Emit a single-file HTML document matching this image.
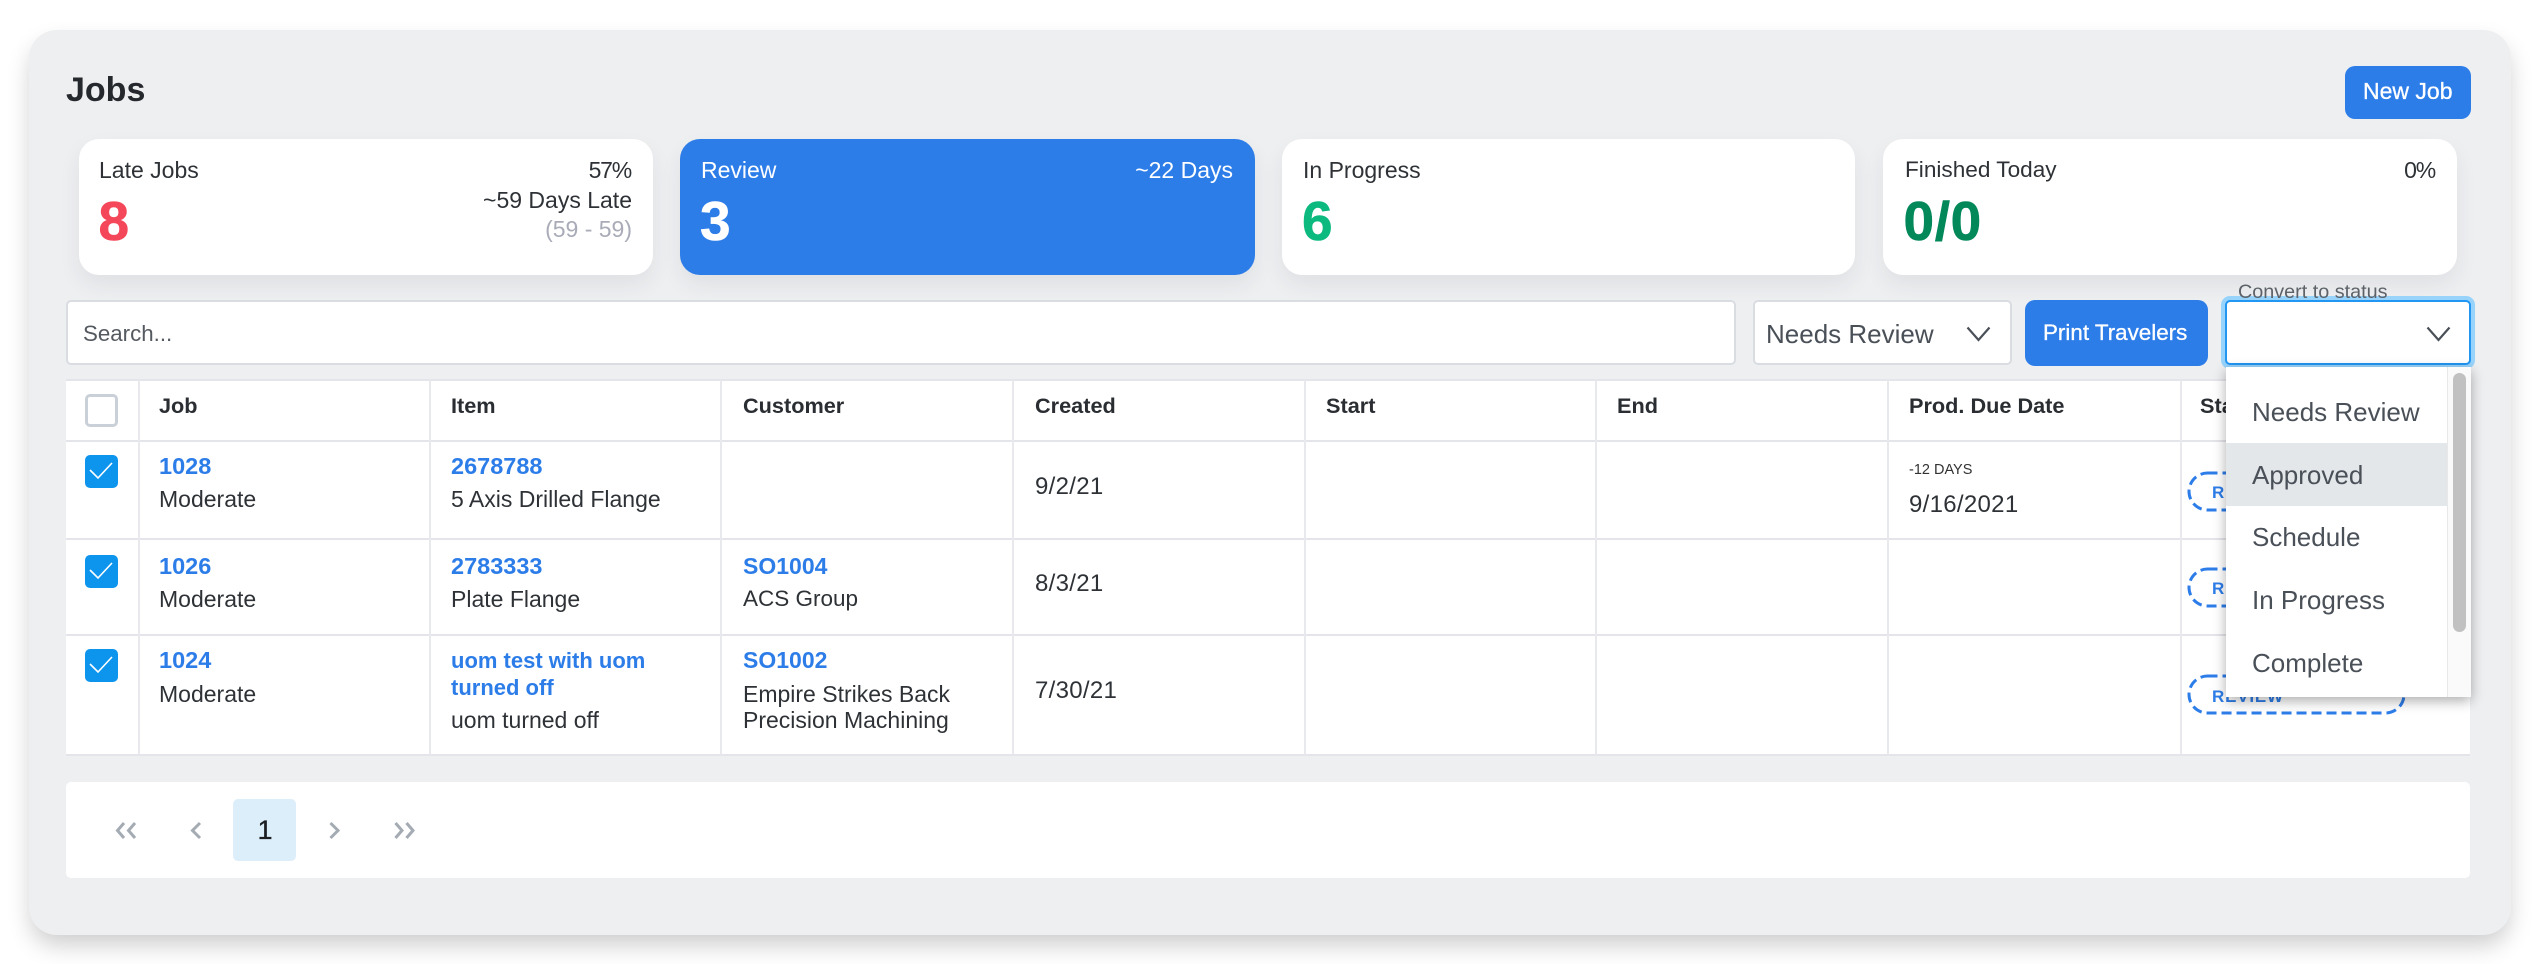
<!DOCTYPE html>
<html lang="en">
<head>
<meta charset="utf-8">
<title>Jobs</title>
<style>
html,body{margin:0;padding:0;background:#fff;width:2539px;height:964px;overflow:hidden}
body{position:relative;font-family:"Liberation Sans",Arial,sans-serif;color:#2e3236}
.a,.t{position:absolute}
.t{line-height:1;white-space:nowrap}
.panel{left:29px;top:30px;width:2482px;height:905px;background:#eeeff1;border-radius:28px;box-shadow:0 12px 24px -2px rgba(0,0,0,.2)}
.card{top:139px;height:136px;background:#fff;border-radius:20px;box-shadow:0 10px 22px rgba(30,40,60,.07)}
.s23{font-size:23px}
.b{font-weight:700}
.l{color:#2d7de9;font-weight:700;font-size:23.5px}
.w{color:#2d7de9;font-weight:700;font-size:22px}
.h{font-weight:700;font-size:21.7px;color:#2a2d31}
.r{text-align:right}
.num{font-size:55px;font-weight:700;-webkit-text-stroke:.6px currentColor}
.d{font-size:24px;letter-spacing:.3px}
.pc{letter-spacing:-1.2px}
.btn{background:#2d7de9;border-radius:10px}
.field{background:#fff;border:2px solid #d9dce1;border-radius:5px;box-sizing:border-box}
.vl{top:380px;width:2px;height:375px;background:#e8e9ed}
.hl{left:66px;width:2404px;height:2px;background:#e4e5ea}
.cb{left:85px;width:33px;height:33px;border-radius:5px;background:#0d95ee}
.cb svg{display:block}
.item{left:2252px;font-size:26px;color:#4a5058}
</style>
</head>
<body>
<div class="a panel"></div>

<div class="t b" style="left:66px;top:73px;font-size:34px;color:#25282c">Jobs</div>
<div class="a btn" style="left:2345px;top:66px;width:126px;height:53px"></div>
<div class="t s23" style="left:2363px;top:80px;color:#fff;-webkit-text-stroke:.3px #fff">New Job</div>

<!-- cards -->
<div class="a card" style="left:79px;width:574px"></div>
<div class="a card" style="left:680px;width:575px;background:#2d7de9"></div>
<div class="a card" style="left:1282px;width:573px"></div>
<div class="a card" style="left:1883px;width:574px"></div>

<div class="t s23" style="left:99px;top:158.5px">Late Jobs</div>
<div class="t s23 r pc" style="right:1908px;top:158.5px">57%</div>
<div class="t s23 r" style="right:1907px;top:188.5px">~59 Days Late</div>
<div class="t s23 r" style="right:1907px;top:218px;color:#a9acb8">(59 - 59)</div>
<div class="t num" style="left:98.5px;top:193.5px;color:#f4485a">8</div>

<div class="t s23" style="left:701px;top:158.5px;color:#fff">Review</div>
<div class="t s23 r" style="right:1306px;top:158.5px;color:#fff">~22 Days</div>
<div class="t num" style="left:700px;top:193.5px;color:#fff">3</div>

<div class="t s23" style="left:1303px;top:158.5px">In Progress</div>
<div class="t num" style="left:1302px;top:193.5px;color:#0cb97f">6</div>

<div class="t" style="left:1905px;top:159px;font-size:22.6px">Finished Today</div>
<div class="t s23 r pc" style="right:104px;top:158.5px">0%</div>
<div class="t num" style="left:1903.5px;top:193.5px;color:#03885a;letter-spacing:.6px">0/0</div>

<!-- toolbar -->
<div class="a field" style="left:66px;top:300px;width:1670px;height:65px"></div>
<div class="t" style="left:83px;top:323px;font-size:22.3px;color:#555a60">Search...</div>

<div class="a field" style="left:1753px;top:300px;width:259px;height:65px"></div>
<div class="t" style="left:1766px;top:320.5px;font-size:26px;color:#4a5058">Needs Review</div>
<svg class="a" style="left:1965px;top:325px" width="27" height="18" viewBox="0 0 27 18"><path d="M2.5 2.5 13.5 15 24.500 2.500" fill="none" stroke="#4a5058" stroke-width="2.2"/></svg>

<div class="a btn" style="left:2025px;top:300px;width:183px;height:66px"></div>
<div class="t" style="left:2043px;top:321.500px;font-size:22.4px;color:#fff;-webkit-text-stroke:.3px #fff">Print Travelers</div>

<div class="a" style="left:2225px;top:300px;width:246px;height:65px;box-sizing:border-box;background:#fff;border:2px solid #2196f3;border-radius:5px;box-shadow:0 0 0 4px #98d3fb"></div>
<div class="t" style="left:2238px;top:282.5px;font-size:19.8px;color:#5d6269">Convert to status</div>
<svg class="a" style="left:2425px;top:325px" width="27" height="18" viewBox="0 0 27 18"><path d="M2.5 2.5 13.5 15 24.500 2.500" fill="none" stroke="#4a5058" stroke-width="2.2"/></svg>

<!-- table -->
<div class="a" style="left:66px;top:380px;width:2404px;height:375px;background:#fff"></div>
<div class="a hl" style="top:379px"></div>
<div class="a hl" style="top:440px"></div>
<div class="a hl" style="top:538px"></div>
<div class="a hl" style="top:634px"></div>
<div class="a hl" style="top:754px"></div>
<div class="a vl" style="left:138px"></div>
<div class="a vl" style="left:429px"></div>
<div class="a vl" style="left:720px"></div>
<div class="a vl" style="left:1012px"></div>
<div class="a vl" style="left:1304px"></div>
<div class="a vl" style="left:1595px"></div>
<div class="a vl" style="left:1887px"></div>
<div class="a vl" style="left:2180px"></div>

<div class="a" style="left:85px;top:394px;width:33px;height:33px;box-sizing:border-box;border:3px solid #c9d0d7;border-radius:5px;background:#fff"></div>
<div class="a cb" style="top:455px"><svg width="33" height="33"><path d="M5 15 13 23 27 8" fill="none" stroke="#fff" stroke-width="1.6"/></svg></div>
<div class="a cb" style="top:555px"><svg width="33" height="33"><path d="M5 15 13 23 27 8" fill="none" stroke="#fff" stroke-width="1.6"/></svg></div>
<div class="a cb" style="top:649px"><svg width="33" height="33"><path d="M5 15 13 23 27 8" fill="none" stroke="#fff" stroke-width="1.6"/></svg></div>

<div class="t h" style="left:159px;top:394.5px">Job</div>
<div class="t h" style="left:451px;top:394.5px">Item</div>
<div class="t h" style="left:743px;top:394.5px">Customer</div>
<div class="t h" style="left:1035px;top:394.5px">Created</div>
<div class="t h" style="left:1326px;top:394.5px">Start</div>
<div class="t h" style="left:1617px;top:394.5px">End</div>
<div class="t h" style="left:1909px;top:394.5px">Prod. Due Date</div>
<div class="t h" style="left:2200px;top:394.5px">Status</div>

<!-- row 1 -->
<div class="t l" style="left:159px;top:454.5px">1028</div>
<div class="t s23" style="left:159px;top:487.5px">Moderate</div>
<div class="t l" style="left:451px;top:454.5px">2678788</div>
<div class="t s23" style="left:451px;top:487.5px">5 Axis Drilled Flange</div>
<div class="t d" style="left:1035px;top:474.5px">9/2/21</div>
<div class="t" style="left:1909px;top:463px;font-size:14.5px;color:#333">-12 DAYS</div>
<div class="t d" style="left:1909px;top:493px">9/16/2021</div>

<!-- row 2 -->
<div class="t l" style="left:159px;top:554.5px">1026</div>
<div class="t s23" style="left:159px;top:587.5px">Moderate</div>
<div class="t l" style="left:451px;top:554.5px">2783333</div>
<div class="t s23" style="left:451px;top:587.5px">Plate Flange</div>
<div class="t w" style="left:743px;top:554.5px;font-size:23px">SO1004</div>
<div class="t" style="left:743px;top:588px;font-size:22.5px">ACS Group</div>
<div class="t d" style="left:1035px;top:572px">8/3/21</div>

<!-- row 3 -->
<div class="t l" style="left:159px;top:648.5px">1024</div>
<div class="t s23" style="left:159px;top:682.5px">Moderate</div>
<div class="t w" style="left:451px;top:649.5px">uom test with uom</div>
<div class="t w" style="left:451px;top:676.5px">turned off</div>
<div class="t s23" style="left:451px;top:708.5px">uom turned off</div>
<div class="t w" style="left:743px;top:648.5px;font-size:23px">SO1002</div>
<div class="t s23" style="left:743px;top:682.5px">Empire Strikes Back</div>
<div class="t s23" style="left:743px;top:708.5px">Precision Machining</div>
<div class="t d" style="left:1035px;top:678.500px">7/30/21</div>

<!-- badges -->
<svg class="a" style="left:2186px;top:470px" width="222" height="246" viewBox="0 0 222 246">
<g fill="none" stroke="#2d7de9" stroke-width="3" stroke-dasharray="10 5">
<rect x="3" y="3" width="215" height="37" rx="18.5"/>
<rect x="3" y="99" width="215" height="37" rx="18.5"/>
<rect x="3" y="206" width="215" height="37" rx="18.5"/>
</g>
</svg>
<div class="t b" style="left:2212px;top:484px;font-size:17px;letter-spacing:.8px;color:#2d7de9">REVIEW</div>
<div class="t b" style="left:2212px;top:580px;font-size:17px;letter-spacing:.8px;color:#2d7de9">REVIEW</div>
<div class="t b" style="left:2212px;top:688px;font-size:17px;letter-spacing:.8px;color:#2d7de9">REVIEW</div>

<!-- dropdown -->
<div class="a" style="left:2226px;top:367px;width:245px;height:330px;background:#fff;box-shadow:0 4px 12px rgba(0,0,0,.32);overflow:hidden">
  <div class="a" style="left:221px;top:0;width:24px;height:330px;background:#fafafa;border-left:1px solid #e8e8e8;box-sizing:border-box"></div>
  <div class="a" style="left:227px;top:6px;width:13px;height:259px;background:#c1c1c1;border-radius:7px"></div>
  <div class="a" style="left:0;top:76px;width:221px;height:63px;background:#e4e7ea"></div>
</div>
<div class="t item" style="top:399px">Needs Review</div>
<div class="t item" style="top:462px">Approved</div>
<div class="t item" style="top:524px">Schedule</div>
<div class="t item" style="top:587px">In Progress</div>
<div class="t item" style="top:650px">Complete</div>

<!-- pagination -->
<div class="a" style="left:66px;top:782px;width:2404px;height:96px;background:#fff;border-radius:5px"></div>
<div class="a" style="left:233px;top:799px;width:63px;height:62px;background:#ddeefb;border-radius:5px"></div>
<div class="t" style="left:257.5px;top:816.5px;font-size:27px;color:#1c1f22;-webkit-text-stroke:.3px #1c1f22">1</div>
<svg class="a" style="left:110px;top:815px" width="310" height="30" viewBox="0 0 310 30">
<g fill="none" stroke="#a4abb3" stroke-width="3">
<path d="M14 8 7.500 15.500 14 23M25 8 18.500 15.500 25 23"/>
<path d="M90 8 82.500 15.500 90 23"/>
<path d="M220.500 8 228 15.500 220.500 23"/>
<path d="M285.500 8 292 15.500 285.500 23M296.500 8 303 15.500 296.500 23"/>
</g>
</svg>
</body>
</html>
